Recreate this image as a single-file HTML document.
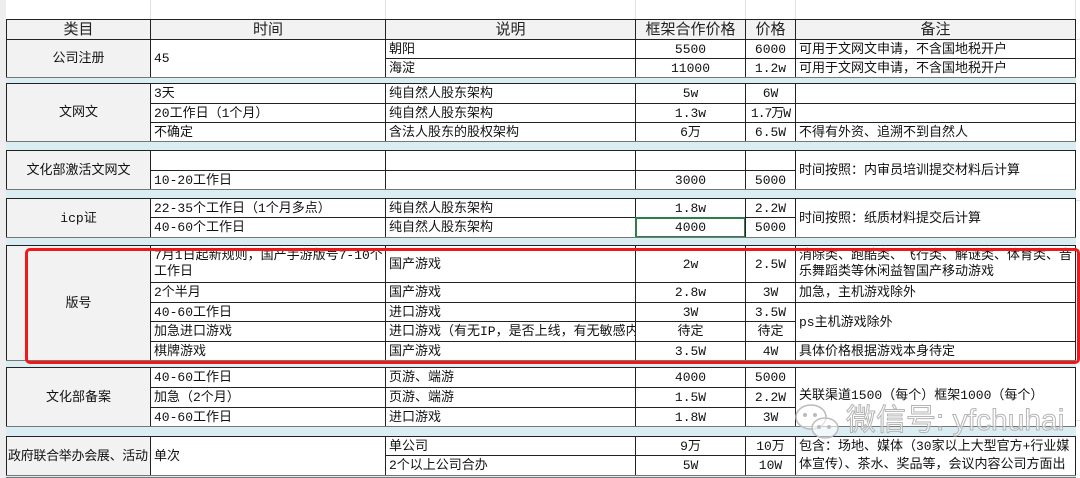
<!DOCTYPE html>
<html><head><meta charset="utf-8"><style>
body{margin:0;width:1080px;height:478px;background:#fff;position:relative;overflow:hidden;font-family:"Liberation Mono","Noto Sans CJK SC",monospace;font-size:13px;color:#111}
.c{position:absolute;box-sizing:border-box;border:1px solid #222;display:flex;align-items:center;padding-left:3px;white-space:nowrap;overflow:hidden;background:#fff;line-height:17px}
.m{justify-content:center;padding-left:0}
.g{background:#f2f2f2}
.h{background:#f2f2f2;justify-content:center;padding-left:0;font-size:15px;color:#222;font-family:"Liberation Sans","Noto Sans CJK SC",sans-serif}
.s{position:absolute;box-sizing:border-box;background:#daedf3;border-top:1px solid #777;border-bottom:1px solid #777}
.gl{position:absolute;background:#e2e2e2}
.w{white-space:normal;align-items:center}
</style></head><body>
<div class="gl" style="left:0;top:0;width:6px;height:478px;background:#eee"></div>
<div class="gl" style="left:150px;top:0;width:1px;height:19px"></div>
<div class="gl" style="left:385px;top:0;width:1px;height:19px"></div>
<div class="gl" style="left:635px;top:0;width:1px;height:19px"></div>
<div class="gl" style="left:745px;top:0;width:1px;height:19px"></div>
<div class="gl" style="left:795px;top:0;width:1px;height:19px"></div>
<div class="gl" style="left:1075px;top:0;width:1px;height:19px"></div>
<div class="gl" style="left:1076px;top:39px;width:4px;height:1px"></div>
<div class="gl" style="left:1076px;top:200px;width:4px;height:1px"></div>
<div class="gl" style="left:1076px;top:420px;width:4px;height:1px"></div>

<div class="c h" style="left:6px;top:19px;width:145px;height:21px">类目</div>
<div class="c h" style="left:150px;top:19px;width:236px;height:21px">时间</div>
<div class="c h" style="left:385px;top:19px;width:251px;height:21px">说明</div>
<div class="c h" style="left:635px;top:19px;width:111px;height:21px">框架合作价格</div>
<div class="c h" style="left:745px;top:19px;width:51px;height:21px">价格</div>
<div class="c h" style="left:795px;top:19px;width:281px;height:21px">备注</div>

<div class="c g m" style="left:6px;top:39px;width:145px;height:39px">公司注册</div>
<div class="c" style="left:150px;top:39px;width:236px;height:39px">45</div>
<div class="c" style="left:385px;top:39px;width:251px;height:20px">朝阳</div>
<div class="c" style="left:385px;top:58px;width:251px;height:20px">海淀</div>
<div class="c m" style="left:635px;top:39px;width:111px;height:20px">5500</div>
<div class="c m" style="left:635px;top:58px;width:111px;height:20px">11000</div>
<div class="c m" style="left:745px;top:39px;width:51px;height:20px">6000</div>
<div class="c m" style="left:745px;top:58px;width:51px;height:20px">1.2w</div>
<div class="c" style="left:795px;top:39px;width:281px;height:20px">可用于文网文申请，不含国地税开户</div>
<div class="c" style="left:795px;top:58px;width:281px;height:20px">可用于文网文申请，不含国地税开户</div>
<div class="s" style="left:6px;top:77px;width:1070px;height:7px"></div>

<div class="c g m" style="left:6px;top:83px;width:145px;height:59px">文网文</div>
<div class="c" style="left:150px;top:83px;width:236px;height:21px">3天</div>
<div class="c" style="left:150px;top:103px;width:236px;height:20px">20工作日（1个月）</div>
<div class="c" style="left:150px;top:122px;width:236px;height:20px">不确定</div>
<div class="c" style="left:385px;top:83px;width:251px;height:21px">纯自然人股东架构</div>
<div class="c" style="left:385px;top:103px;width:251px;height:20px">纯自然人股东架构</div>
<div class="c" style="left:385px;top:122px;width:251px;height:20px">含法人股东的股权架构</div>
<div class="c m" style="left:635px;top:83px;width:111px;height:21px">5w</div>
<div class="c m" style="left:635px;top:103px;width:111px;height:20px">1.3w</div>
<div class="c m" style="left:635px;top:122px;width:111px;height:20px">6万</div>
<div class="c m" style="left:745px;top:83px;width:51px;height:21px">6W</div>
<div class="c m" style="left:745px;top:103px;width:51px;height:20px;letter-spacing:-1px">1.7万W</div>
<div class="c m" style="left:745px;top:122px;width:51px;height:20px">6.5W</div>
<div class="c" style="left:795px;top:83px;width:281px;height:21px"></div>
<div class="c" style="left:795px;top:103px;width:281px;height:20px"></div>
<div class="c" style="left:795px;top:122px;width:281px;height:20px">不得有外资、追溯不到自然人</div>
<div class="s" style="left:6px;top:141px;width:1070px;height:10px"></div>

<div class="c g m" style="left:6px;top:150px;width:145px;height:40px">文化部激活文网文</div>
<div class="c" style="left:150px;top:150px;width:236px;height:21px"></div>
<div class="c" style="left:150px;top:170px;width:236px;height:20px">10-20工作日</div>
<div class="c" style="left:385px;top:150px;width:251px;height:21px"></div>
<div class="c" style="left:385px;top:170px;width:251px;height:20px"></div>
<div class="c m" style="left:635px;top:150px;width:111px;height:21px"></div>
<div class="c m" style="left:635px;top:170px;width:111px;height:20px">3000</div>
<div class="c m" style="left:745px;top:150px;width:51px;height:21px"></div>
<div class="c m" style="left:745px;top:170px;width:51px;height:20px">5000</div>
<div class="c" style="left:795px;top:150px;width:281px;height:40px">时间按照：内审员培训提交材料后计算</div>
<div class="s" style="left:6px;top:189px;width:1070px;height:10px"></div>

<div class="c g m" style="left:6px;top:198px;width:145px;height:40px">icp证</div>
<div class="c" style="left:150px;top:198px;width:236px;height:20px">22-35个工作日（1个月多点）</div>
<div class="c" style="left:150px;top:217px;width:236px;height:21px">40-60个工作日</div>
<div class="c" style="left:385px;top:198px;width:251px;height:20px">纯自然人股东架构</div>
<div class="c" style="left:385px;top:217px;width:251px;height:21px">纯自然人股东架构</div>
<div class="c m" style="left:635px;top:198px;width:111px;height:20px">1.8w</div>
<div class="c m" style="left:635px;top:217px;width:111px;height:21px;border:2px solid #2e7d4f">4000</div>
<div class="c m" style="left:745px;top:198px;width:51px;height:20px">2.2W</div>
<div class="c m" style="left:745px;top:217px;width:51px;height:21px">5000</div>
<div class="c" style="left:795px;top:198px;width:281px;height:40px">时间按照：纸质材料提交后计算</div>
<div class="s" style="left:6px;top:237px;width:1070px;height:9px"></div>

<div class="c g m" style="left:6px;top:245px;width:145px;height:116px">版号</div>
<div class="c w" style="left:150px;top:245px;width:236px;height:38px;line-height:16px">7月1日起新规则，国产手游版号7-10个工作日</div>
<div class="c" style="left:150px;top:282px;width:236px;height:21px">2个半月</div>
<div class="c" style="left:150px;top:302px;width:236px;height:20px">40-60工作日</div>
<div class="c" style="left:150px;top:321px;width:236px;height:21px">加急进口游戏</div>
<div class="c" style="left:150px;top:341px;width:236px;height:20px">棋牌游戏</div>
<div class="c" style="left:385px;top:245px;width:251px;height:38px">国产游戏</div>
<div class="c" style="left:385px;top:282px;width:251px;height:21px">国产游戏</div>
<div class="c" style="left:385px;top:302px;width:251px;height:20px">进口游戏</div>
<div class="c" style="left:385px;top:321px;width:251px;height:21px">进口游戏（有无IP，是否上线，有无敏感内容</div>
<div class="c" style="left:385px;top:341px;width:251px;height:20px">国产游戏</div>
<div class="c m" style="left:635px;top:245px;width:111px;height:38px">2w</div>
<div class="c m" style="left:635px;top:282px;width:111px;height:21px">2.8w</div>
<div class="c m" style="left:635px;top:302px;width:111px;height:20px">3W</div>
<div class="c m" style="left:635px;top:321px;width:111px;height:21px">待定</div>
<div class="c m" style="left:635px;top:341px;width:111px;height:20px">3.5W</div>
<div class="c m" style="left:745px;top:245px;width:51px;height:38px">2.5W</div>
<div class="c m" style="left:745px;top:282px;width:51px;height:21px">3W</div>
<div class="c m" style="left:745px;top:302px;width:51px;height:20px">3.5W</div>
<div class="c m" style="left:745px;top:321px;width:51px;height:21px">待定</div>
<div class="c m" style="left:745px;top:341px;width:51px;height:20px">4W</div>
<div class="c w" style="left:795px;top:245px;width:281px;height:38px;line-height:16px">消除类、跑酷类、飞行类、解谜类、体育类、音乐舞蹈类等休闲益智国产移动游戏</div>
<div class="c" style="left:795px;top:282px;width:281px;height:21px">加急，主机游戏除外</div>
<div class="c" style="left:795px;top:302px;width:281px;height:40px">ps主机游戏除外</div>
<div class="c" style="left:795px;top:341px;width:281px;height:20px">具体价格根据游戏本身待定</div>
<div class="s" style="left:6px;top:360px;width:1070px;height:8px"></div>

<div class="c g m" style="left:6px;top:367px;width:145px;height:60px">文化部备案</div>
<div class="c" style="left:150px;top:367px;width:236px;height:21px">40-60工作日</div>
<div class="c" style="left:150px;top:387px;width:236px;height:21px">加急（2个月）</div>
<div class="c" style="left:150px;top:407px;width:236px;height:20px">40-60工作日</div>
<div class="c" style="left:385px;top:367px;width:251px;height:21px">页游、端游</div>
<div class="c" style="left:385px;top:387px;width:251px;height:21px">页游、端游</div>
<div class="c" style="left:385px;top:407px;width:251px;height:20px">进口游戏</div>
<div class="c m" style="left:635px;top:367px;width:111px;height:21px">4000</div>
<div class="c m" style="left:635px;top:387px;width:111px;height:21px">1.5W</div>
<div class="c m" style="left:635px;top:407px;width:111px;height:20px">1.8W</div>
<div class="c m" style="left:745px;top:367px;width:51px;height:21px">5000</div>
<div class="c m" style="left:745px;top:387px;width:51px;height:21px">2.2W</div>
<div class="c m" style="left:745px;top:407px;width:51px;height:20px">3W</div>
<div class="c" style="left:795px;top:367px;width:281px;height:60px;align-items:flex-start;padding-top:19px">关联渠道1500（每个）框架1000（每个）</div>
<div class="s" style="left:6px;top:426px;width:1070px;height:11px"></div>

<div class="c g" style="left:6px;top:436px;width:145px;height:40px;padding-left:1px;letter-spacing:-0.3px">政府联合举办会展、活动</div>
<div class="c" style="left:150px;top:436px;width:236px;height:40px">单次</div>
<div class="c" style="left:385px;top:436px;width:251px;height:20px">单公司</div>
<div class="c" style="left:385px;top:455px;width:251px;height:21px">2个以上公司合办</div>
<div class="c m" style="left:635px;top:436px;width:111px;height:20px">9万</div>
<div class="c m" style="left:635px;top:455px;width:111px;height:21px">5W</div>
<div class="c m" style="left:745px;top:436px;width:51px;height:20px">10万</div>
<div class="c m" style="left:745px;top:455px;width:51px;height:21px">10W</div>
<div class="c w" style="left:795px;top:436px;width:281px;height:40px;line-height:18px">包含：场地、媒体（30家以上大型官方+行业媒体宣传）、茶水、奖品等，会议内容公司方面出</div>
<div class="s" style="left:6px;top:475px;width:1070px;height:3px"></div>

<div style="position:absolute;left:25px;top:248px;width:1049px;height:110px;border:3px solid #f01818;border-radius:5px"></div>

<svg style="position:absolute;left:793px;top:402px" width="50" height="42" viewBox="0 0 50 42">
<g fill="rgba(255,255,255,0.6)" stroke="#bbb" stroke-width="1.5">
<ellipse cx="18" cy="15" rx="15" ry="12"/>
<ellipse cx="32" cy="26" rx="13" ry="10"/>
</g>
<g fill="#bbb"><circle cx="26" cy="25" r="2"/><circle cx="36" cy="25" r="2"/><circle cx="12" cy="13" r="2"/><circle cx="22" cy="13" r="2"/></g>
</svg>
<div style="position:absolute;left:846px;top:402px;font-size:30px;line-height:38px;color:rgba(255,255,255,0.5);-webkit-text-stroke:1px #b5b5b5;font-family:'Liberation Sans','Noto Sans CJK SC',sans-serif;white-space:nowrap">微信号: yfchuhai</div>
</body></html>
